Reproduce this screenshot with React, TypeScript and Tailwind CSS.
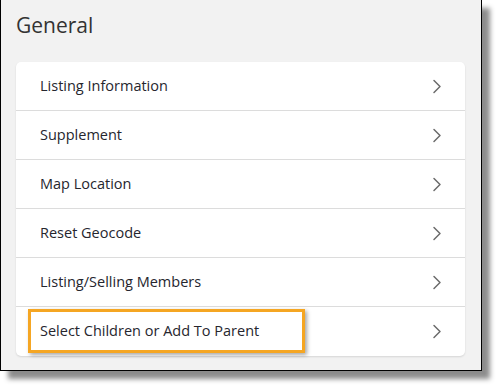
const items = [
  "Listing Information",
  "Supplement",
  "Map Location",
  "Reset Geocode",
  "Listing/Selling Members",
  "Select Children or Add To Parent",
];

const Chevron = () => (
  <svg width="10" height="15" viewBox="0 0 10 15" fill="none" className="text-[#6b6b6b]">
    <path d="M2 1.5 L8 7.5 L2 13.5" stroke="currentColor" strokeWidth="1.5" strokeLinecap="round" strokeLinejoin="round" />
  </svg>
);

export default function App() {
  return (
    <div className="w-[496px] h-[386px] bg-white" style={{ fontFamily: '"Open Sans", "Noto Sans", sans-serif' }}>
      <div className="relative w-[482px] h-[371px] bg-[#f2f2f2] border-l border-r border-b border-black shadow-[8px_8px_5px_rgba(0,0,0,0.45)] px-[15px]">
        <h1 className="pt-[10px] h-[62px] text-[21px] leading-[30px] text-[#333] font-medium">General</h1>
        <div className="w-[449px] bg-white rounded-[5px] shadow-[0_1px_2px_rgba(0,0,0,0.12)]">
          {items.map((label, i) => (
            <div
              key={label}
              className={`flex items-center justify-between h-[49px] pl-[24px] pr-[23px] text-[14.5px] text-[#26262e] ${
                i < items.length - 1 ? "border-b border-[#dcdcdc]" : "h-[48px]"
              }`}
            >
              <span className="-mt-[1px]">{label}</span>
              <Chevron />
            </div>
          ))}
        </div>
        <div className="absolute left-[27px] top-[309px] w-[277px] h-[44px] border-[3px] border-[#f5a623] shadow-[2px_2px_4px_rgba(0,0,0,0.35)]" />
      </div>
    </div>
  );
}
